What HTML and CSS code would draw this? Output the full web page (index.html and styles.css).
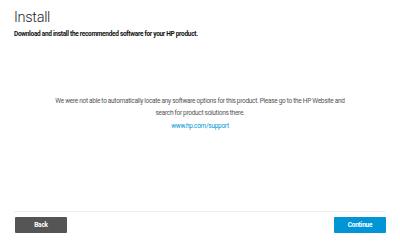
FILE: index.html
```html
<!DOCTYPE html>
<html lang="en">
<head>
    <meta charset="UTF-8">
    <title>Install</title>
    <link rel="stylesheet" href="styles.css">
</head>
<body>
<div class="page">
    <div class="header">
        <h1>Install</h1>
        <p class="subtitle">Download and install the recommended software for your HP product.</p>
    </div>

    <div class="message">
        <p>We were not able to automatically locate any software options for this product. Please go to the HP Website and<br>
        search for product solutions there.</p>
        <a href="#" class="support-link">www.hp.com/support</a>
    </div>

    <div class="footer">
        <button class="btn btn-back">Back</button>
        <button class="btn btn-continue">Continue</button>
    </div>
</div>
</body>
</html>
```

FILE: styles.css
```css
body {
    margin: 0;
    font-family: "Roboto", sans-serif;
    color: #222;
    background: #fff;
}
.page {
    height: 245px;
    display: flex;
    flex-direction: column;
    padding: 0 14px;
    box-sizing: border-box;
}
.header {
    padding-top: 8px;
}
h1 {
    font-weight: 300;
    font-size: 14.5px;
    line-height: 20px;
    letter-spacing: -0.3px;
    margin: 0;
    color: #222;
}
.subtitle {
    font-size: 6.5px;
    font-weight: bold;
    letter-spacing: -0.3px;
    margin: 2px 0 0;
    color: #111;
}
.message {
    flex: 1;
    text-align: center;
    padding-top: 57px;
    font-size: 6.5px;
    letter-spacing: -0.3px;
    color: #555;
}
.message p {
    margin: 0;
    line-height: 12px;
}
.support-link {
    display: inline-block;
    margin-top: 3px;
    color: #0096d6;
    text-decoration: none;
}
.footer {
    border-top: 1px solid #eee;
    display: flex;
    justify-content: space-between;
    padding: 5px 0 12px 1px;
}
.btn {
    width: 52px;
    height: 16px;
    border: none;
    border-radius: 1px;
    font-family: inherit;
    font-size: 6.5px;
    font-weight: bold;
    letter-spacing: -0.2px;
    color: #fff;
    padding: 0;
}
.btn-back {
    background: #555;
}
.btn-continue {
    background: #0096d6;
}
```
